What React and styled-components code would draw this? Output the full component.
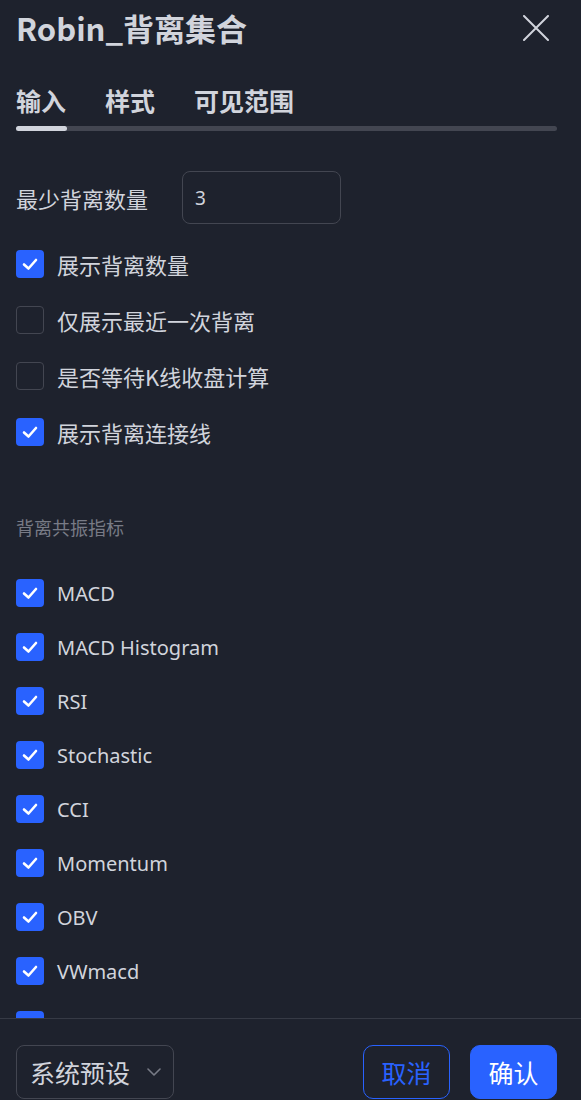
import React from 'react'
import styled, { createGlobalStyle } from 'styled-components'

const GlobalStyle = createGlobalStyle`
	html, body {
		margin: 0;
		padding: 0;
		background: #1e222d;
	}
	body {
		font-family: "Noto Sans CJK SC", "Noto Sans", sans-serif;
		color: #d1d4dc;
	}
`

const options = [
	{ label: '展示背离数量', checked: true },
	{ label: '仅展示最近一次背离', checked: false },
	{ label: '是否等待K线收盘计算', checked: false },
	{ label: '展示背离连接线', checked: true },
]

const indicators = ['MACD', 'MACD Histogram', 'RSI', 'Stochastic', 'CCI', 'Momentum', 'OBV', 'VWmacd', 'CMF']

const CheckBox = ({ checked }) => (
	<Box checked={checked}>
		{checked && (
			<svg width="28" height="28" viewBox="0 0 28 28">
				<polyline points="8,14.5 12.5,18.5 20,10" fill="none" stroke="#fff" strokeWidth="2.6" strokeLinecap="round" strokeLinejoin="round" />
			</svg>
		)}
	</Box>
)

const App = () => (
	<React.Fragment>
		<GlobalStyle />
		<Dialog>
			{ /* header: title + tabs */ }
			<TitleRow>
				<Title>Robin_背离集合</Title>
				<CloseButton>
					<svg width="26" height="26" viewBox="0 0 26 26">
						<path d="M1 1 L25 25 M25 1 L1 25" stroke="#d1d4dc" strokeWidth="2" strokeLinecap="round" />
					</svg>
				</CloseButton>
			</TitleRow>
			<TabList>
				<Tab>输入</Tab>
				<Tab>样式</Tab>
				<Tab>可见范围</Tab>
			</TabList>
			<Track>
				<Indicator />
			</Track>

			{ /* scrollable content */ }
			<Body>
				<FieldRow>
					<FieldLabel>最少背离数量</FieldLabel>
					<NumberInput>3</NumberInput>
				</FieldRow>
				<Options>
					{options.map(o => (
						<CheckRow key={o.label} height={56}>
							<CheckBox checked={o.checked} />
							<CheckLabel>{o.label}</CheckLabel>
						</CheckRow>
					))}
				</Options>
				<SectionTitle>背离共振指标</SectionTitle>
				<Indicators>
					{indicators.map(name => (
						<CheckRow key={name} height={54}>
							<CheckBox checked />
							<CheckLabel latin>{name}</CheckLabel>
						</CheckRow>
					))}
				</Indicators>
			</Body>

			{ /* footer */ }
			<Footer>
				<Preset>
					系统预设
					<svg width="14" height="8" viewBox="0 0 14 8">
						<polyline points="1,1 7,7 13,1" fill="none" stroke="#787b86" strokeWidth="1.6" strokeLinecap="round" strokeLinejoin="round" />
					</svg>
				</Preset>
				<Actions>
					<Button>取消</Button>
					<Button primary>确认</Button>
				</Actions>
			</Footer>
		</Dialog>
	</React.Fragment>
)

const Dialog = styled.div`
	width: 581px;
	height: 1100px;
	display: flex;
	flex-direction: column;
	background: #1e222d;
	overflow: hidden;
`

const TitleRow = styled.div`
	height: 56px;
	padding: 0 32px 0 16px;
	display: flex;
	align-items: center;
	justify-content: space-between;
	flex-shrink: 0;
`

const Title = styled.div`
	font-size: 31px;
	font-weight: 700;
	color: #d1d4dc;
	line-height: 40px;
`

const CloseButton = styled.div`
	width: 26px;
	height: 26px;
	display: flex;
`

const TabList = styled.div`
	display: flex;
	gap: 39px;
	padding: 26px 16px 0;
	flex-shrink: 0;
`

const Tab = styled.div`
	font-size: 25px;
	font-weight: 700;
	line-height: 36px;
	color: #d1d4dc;
`

const Track = styled.div`
	margin: 8px 24px 0 16px;
	height: 5px;
	border-radius: 3px;
	background: #434651;
	flex-shrink: 0;
`

const Indicator = styled.div`
	width: 51px;
	height: 5px;
	border-radius: 3px;
	background: #d1d4dc;
`

const Body = styled.div`
	flex: 1;
	overflow: hidden;
	padding: 40px 16px 0;
`

const FieldRow = styled.div`
	display: flex;
	align-items: center;
	gap: 34px;
	height: 53px;
`

const FieldLabel = styled.div`
	font-size: 22px;
	color: #d1d4dc;
`

const NumberInput = styled.div`
	box-sizing: border-box;
	width: 159px;
	height: 53px;
	border: 1px solid #434651;
	border-radius: 8px;
	padding: 0 12px;
	display: flex;
	align-items: center;
	font-family: "Noto Sans", sans-serif;
	font-size: 19px;
	color: #d1d4dc;
`

const Options = styled.div`
	margin-top: 12px;
`

const CheckRow = styled.div`
	display: flex;
	align-items: center;
	gap: 13px;
	height: ${p => p.height}px;
`

const Box = styled.div`
	box-sizing: border-box;
	width: 28px;
	height: 28px;
	border-radius: 4px;
	flex-shrink: 0;
	background: ${p => p.checked ? '#2962ff' : 'transparent'};
	border: ${p => p.checked ? 'none' : '1px solid #434651'};
	display: flex;
`

const CheckLabel = styled.div`
	font-family: ${p => p.latin ? '"Noto Sans", sans-serif' : '"Noto Sans CJK SC", "Noto Sans", sans-serif'};
	font-size: ${p => p.latin ? 20 : 22}px;
	color: #d1d4dc;
`

const SectionTitle = styled.div`
	margin-top: 55px;
	font-size: 18px;
	line-height: 24px;
	color: #787b86;
`

const Indicators = styled.div`
	margin-top: 27px;
`

const Footer = styled.div`
	height: 82px;
	flex-shrink: 0;
	box-sizing: border-box;
	border-top: 1px solid #363a45;
	padding: 26px 24px 0 16px;
	display: flex;
	justify-content: space-between;
	align-items: flex-start;
`

const Preset = styled.div`
	box-sizing: border-box;
	width: 158px;
	height: 54px;
	border: 1px solid #434651;
	border-radius: 8px;
	padding: 0 12px 0 13px;
	display: flex;
	align-items: center;
	justify-content: space-between;
	font-size: 25px;
	color: #d1d4dc;
`

const Actions = styled.div`
	display: flex;
	gap: 20px;
`

const Button = styled.div`
	box-sizing: border-box;
	width: 87px;
	height: 54px;
	border-radius: 10px;
	display: flex;
	align-items: center;
	justify-content: center;
	font-size: 25px;
	background: ${p => p.primary ? '#2962ff' : 'transparent'};
	border: 1px solid #2962ff;
	color: ${p => p.primary ? '#ffffff' : '#2962ff'};
`

export default App
